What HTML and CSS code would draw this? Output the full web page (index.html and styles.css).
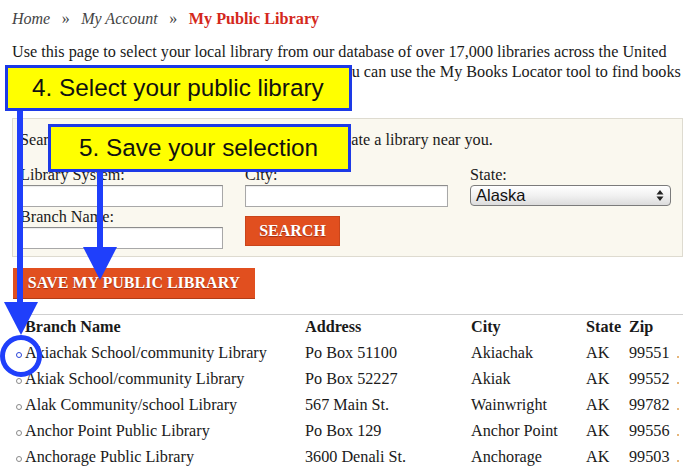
FILE: index.html
```html
<!DOCTYPE html>
<html>
<head>
<meta charset="utf-8">
<link rel="stylesheet" href="styles.css">
</head>
<body>
<div class="page">
  <nav class="crumbs">
    <a class="crumb">Home</a><span class="sep">»</span><a class="crumb">My Account</a><span class="sep">»</span><span class="current">My Public Library</span>
  </nav>
  <p class="intro">Use this page to select your local library from our database of over 17,000 libraries across the United States. Once you have selected your local library, you can use the My Books Locator tool to find books at your library.</p>

  <section class="search">
    <p class="search-lead">Search for your library by name, city or state to locate a library near you.</p>
    <div class="search-grid">
      <div class="col">
        <label class="field"><span class="lbl">Library System:</span><span class="input"></span></label>
        <label class="field"><span class="lbl">Branch Name:</span><span class="input"></span></label>
      </div>
      <div class="col">
        <label class="field"><span class="lbl">City:</span><span class="input"></span></label>
        <span class="btn btn-search">SEARCH</span>
      </div>
      <div class="col">
        <label class="field"><span class="lbl">State:</span>
          <span class="select"><span>Alaska</span>
            <svg width="8" height="13" viewBox="0 0 8 13"><path d="M4 1 L7.5 5.5 H0.5 Z M4 12 L7.5 7.5 H0.5 Z" fill="#222"/></svg>
          </span>
        </label>
      </div>
    </div>
  </section>

  <span class="btn btn-save">SAVE MY PUBLIC LIBRARY</span>
  <hr class="rule">

  <table class="libs">
    <colgroup><col class="c-radio"><col class="c-name"><col class="c-addr"><col class="c-city"><col class="c-state"><col class="c-zip"><col class="c-dot"></colgroup>
    <thead>
      <tr><th></th><th>Branch Name</th><th>Address</th><th>City</th><th>State</th><th>Zip</th><th></th></tr>
    </thead>
    <tbody>
      <tr><td><span class="radio on"></span></td><td>Akiachak School/community Library</td><td>Po Box 51100</td><td>Akiachak</td><td>AK</td><td>99551</td><td><span class="dot"></span></td></tr>
      <tr><td><span class="radio"></span></td><td>Akiak School/community Library</td><td>Po Box 52227</td><td>Akiak</td><td>AK</td><td>99552</td><td><span class="dot"></span></td></tr>
      <tr><td><span class="radio"></span></td><td>Alak Community/school Library</td><td>567 Main St.</td><td>Wainwright</td><td>AK</td><td>99782</td><td><span class="dot"></span></td></tr>
      <tr><td><span class="radio"></span></td><td>Anchor Point Public Library</td><td>Po Box 129</td><td>Anchor Point</td><td>AK</td><td>99556</td><td><span class="dot"></span></td></tr>
      <tr><td><span class="radio"></span></td><td>Anchorage Public Library</td><td>3600 Denali St.</td><td>Anchorage</td><td>AK</td><td>99503</td><td><span class="dot"></span></td></tr>
    </tbody>
  </table>
</div>

<svg class="arrows" width="690" height="466" viewBox="0 0 690 466">
  <rect x="17" y="108" width="6" height="196" fill="#1f3ffb"/>
  <path d="M4 302 L38 302 L21 335 Z" fill="#1f3ffb"/>
  <circle cx="21" cy="356" r="18.5" fill="none" stroke="#1f3ffb" stroke-width="5"/>
  <rect x="97" y="168" width="6" height="82" fill="#1f3ffb"/>
  <path d="M83 247 L117 247 L100 280 Z" fill="#1f3ffb"/>
</svg>
<div class="callout callout-1">4. Select your public library</div>
<div class="callout callout-2">5. Save your selection</div>
</body>
</html>
```

FILE: styles.css
```css
html, body { margin: 0; padding: 0; background: #fff; }
body {
  position: relative;
  width: 690px;
  height: 466px;
  overflow: hidden;
  font-family: "Liberation Serif", "Times New Roman", serif;
  font-size: 16.2px;
  color: #1a1a1a;
}
.page {
  padding: 9px 7px 0 12px;
  width: 671px;
}
.crumbs {
  display: flex;
  align-items: baseline;
  gap: 11.5px;
  line-height: 19px;
  height: 19px;
  font-size: 16px;
}
.crumb { font-style: italic; color: #444; }
.sep { color: #444; }
.current { font-weight: bold; color: #d4281c; font-size: 16.2px; }
.intro {
  margin: 14px 0 0;
  line-height: 20px;
  width: 671px;
}
.search {
  margin-top: 16px;
  background: #faf8ef;
  border: 1px solid #dedbd0;
  padding: 11px 10px 7px 7px;
}
.search-lead { margin: 0; line-height: 20px; }
.search-grid {
  display: grid;
  grid-template-columns: 225px 225px 1fr;
  margin-top: 16px;
}
.col { display: flex; flex-direction: column; gap: 1px; }
.field { display: flex; flex-direction: column; }
.lbl { line-height: 18px; height: 18px; margin-bottom: 1px; }
.input {
  display: block;
  width: 201px;
  height: 20px;
  background: #fff;
  border: 1px solid #a8a8a8;
  border-top-color: #8c8c8c;
  box-shadow: inset 0 1px 1px rgba(0,0,0,0.08);
}
.select {
  display: flex;
  align-items: center;
  justify-content: space-between;
  width: 188px;
  height: 19px;
  padding: 0 6px 0 5px;
  border: 1px solid #7b7b7b;
  border-radius: 4px;
  background: linear-gradient(#ffffff, #f1f1f1 50%, #dcdcdc);
  font-family: "Liberation Sans", Arial, sans-serif;
  font-size: 16.5px;
  color: #111;
}
.btn {
  display: inline-flex;
  align-items: center;
  justify-content: center;
  background: #e14f1f;
  color: #fff;
  font-weight: bold;
  font-size: 16px;
  text-shadow: 0 1px 1px rgba(80,0,0,0.45);
  box-sizing: border-box;
}
.btn-search {
  width: 95px;
  height: 30px;
  margin-top: 8px;
  border: 1px solid #c9451b;
}
.btn-save {
  margin: 11px 0 0 1px;
  width: 242px;
  height: 31px;
  border-bottom: 1px solid #b23c16;
}
.rule {
  margin: 15px 0 0;
  border: 0;
  border-top: 1px solid #cfcfcf;
  height: 0;
}
.libs {
  width: 671px;
  border-collapse: collapse;
  table-layout: fixed;
}
.libs th, .libs td {
  padding: 0;
  text-align: left;
  white-space: nowrap;
  vertical-align: baseline;
}
.libs th { height: 25px; line-height: 25px; font-weight: bold; }
.libs td { height: 26px; line-height: 26px; }
.c-radio { width: 13px; }
.c-name { width: 280px; }
.c-addr { width: 166px; }
.c-city { width: 115px; }
.c-state { width: 43px; }
.c-zip { width: 46px; }
.c-dot { width: 8px; }
.radio {
  display: inline-block;
  width: 4px;
  height: 4px;
  margin-left: 4px;
  border: 1px solid #8a8a8a;
  border-radius: 50%;
  background: #fff;
}
.radio.on { border-color: #2a44d8; }
.dot {
  display: inline-block;
  width: 2px;
  height: 2px;
  margin-left: 2px;
  background: #e6b67a;
}
.arrows {
  position: absolute;
  left: 0;
  top: 0;
  pointer-events: none;
}
.callout {
  position: absolute;
  box-sizing: border-box;
  background: #ffff00;
  border: 3px solid #1d3ae6;
  font-family: "Liberation Sans", Arial, sans-serif;
  font-size: 24.3px;
  color: #111;
  display: flex;
  align-items: center;
}
.callout-1 {
  left: 5px;
  top: 65px;
  width: 347px;
  height: 46px;
  padding-left: 24px;
}
.callout-2 {
  left: 48px;
  top: 124px;
  width: 303px;
  height: 48px;
  padding-left: 28px;
}
```
